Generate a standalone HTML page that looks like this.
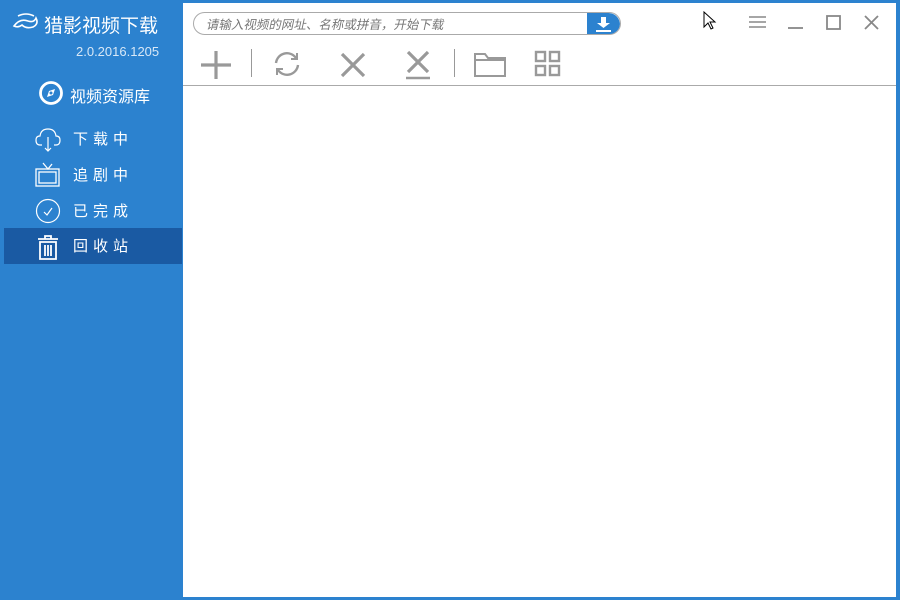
<!DOCTYPE html>
<html><head><meta charset="utf-8"><style>
*{margin:0;padding:0;box-sizing:border-box}
body{width:900px;height:600px;background:#2c82cf;position:relative;overflow:hidden;font-family:"Liberation Sans","Noto Sans CJK SC",sans-serif;color:#fff}
.main{position:absolute;left:183px;top:3px;width:713px;height:594px;background:#fff}
.title{position:absolute;left:44px;top:11px;font-size:19px}
.ver{position:absolute;left:76px;top:44px;font-size:13px;color:#d8e8f7}
.lib{position:absolute;left:70px;top:83px;font-size:16px}
.item{position:absolute;left:4px;width:178px;height:36px;font-size:15px;letter-spacing:5px}
.item span{position:absolute;left:69px;top:7px}
.item svg{position:absolute;left:31px;top:5px}
.sel{background:#1a5aa3}
.search{position:absolute;left:10px;top:9px;width:428px;height:23px;border:1px solid #aaa;border-radius:12px;background:#fff;overflow:hidden}
.search i{position:absolute;left:13px;top:1px;font-size:12.5px;color:#777;font-style:normal;transform:skewX(-12deg);transform-origin:center}
.search b{position:absolute;right:0;top:0;width:33px;height:23px;background:#2c82cf;border-radius:0 12px 12px 0}
.line{position:absolute;left:0;top:82px;width:713px;height:1px;background:#aaa}
svg{position:absolute}
</style></head><body>
<svg style="left:12px;top:12px" width="30" height="20" viewBox="0 0 30 20" fill="none" stroke="#fff" stroke-width="1.6"><path d="M2 14 Q8 6 16 9 Q22 11 24 6 Q27 12 21 15 Q14 17 10 13 Q6 16 2 14 Z"/><path d="M6 4 Q14 0 22 4"/></svg>
<div class="title">猎影视频下载</div>
<div class="ver">2.0.2016.1205</div>
<svg style="left:38px;top:80px" width="26" height="26" viewBox="0 0 26 26"><circle cx="13" cy="13" r="10.5" fill="none" stroke="#fff" stroke-width="2.8"/><path d="M9 17 L11 11 L17 9 L15 15 Z" fill="#fff"/><circle cx="13" cy="13" r="1.5" fill="#2c82cf"/></svg>
<div class="lib">视频资源库</div>
<div class="item" style="top:121px"><svg width="26" height="26" viewBox="0 0 26 26" fill="none" stroke="#fff" stroke-width="1.2"><path d="M7 19 H5 Q1 19 1 14 Q1 10 5 10 Q6 3 13 3 Q20 3 21 10 Q25 10 25 14 Q25 19 21 19 H19"/><path d="M13 11 V25 M10 22 L13 25 L16 22"/></svg><span>下载中</span></div>
<div class="item" style="top:157px"><svg width="26" height="26" viewBox="0 0 26 26" fill="none" stroke="#fff" stroke-width="1.3"><rect x="1" y="7" width="23" height="17"/><rect x="4" y="10" width="17" height="11"/><path d="M8 1 L13 7 L17 2"/></svg><span>追剧中</span></div>
<div class="item" style="top:193px"><svg width="26" height="26" viewBox="0 0 26 26" fill="none" stroke="#fff" stroke-width="1.2"><circle cx="13" cy="13" r="11.5"/><path d="M9 14 L12 17 L17 10"/></svg><span>已完成</span></div>
<div class="item sel" style="top:228px"><svg width="26" height="28" viewBox="0 0 26 28" fill="none" stroke="#fff" stroke-width="1.8"><path d="M3 6 H23 M10 6 V3 H16 V6"/><path d="M5 9 H21 V26 H5 Z"/><path d="M10 12 V23 M13 12 V23 M16 12 V23"/></svg><span>回收站</span></div>
<div class="main">
<div class="search"><i>请输入视频的网址、名称或拼音，开始下载</i><b><svg style="left:8px;top:4px" width="17" height="15" viewBox="0 0 17 15" fill="#fff"><path d="M6 0 H11 V6 H15 L8.5 11 L2 6 H6 Z"/><rect x="1" y="13" width="15" height="2"/></svg></b></div>
<svg style="left:520px;top:8px" width="14" height="20" viewBox="0 0 14 20"><path d="M1 1 V16 L5 12 L8 18 L10 17 L7 11 H12 Z" fill="#fff" stroke="#000" stroke-width="1"/></svg>
<svg style="left:566px;top:12px" width="18" height="14" stroke="#888" stroke-width="1.6"><path d="M0 2 H17 M0 7 H17 M0 12 H17"/></svg>
<svg style="left:605px;top:16px" width="16" height="14" stroke="#888" stroke-width="1.8"><path d="M0 9 H15"/></svg>
<svg style="left:643px;top:12px" width="16" height="16" fill="none" stroke="#888" stroke-width="1.8"><rect x="1" y="1" width="13" height="13"/></svg>
<svg style="left:681px;top:12px" width="16" height="16" stroke="#888" stroke-width="1.8"><path d="M1 1 L14 14 M14 1 L1 14"/></svg>
<svg style="left:17px;top:48px" width="32" height="28" stroke="#999" stroke-width="3.2"><path d="M16 0 V28 M1 14 H31"/></svg>
<div style="position:absolute;left:68px;top:46px;width:1px;height:28px;background:#999"></div>
<div style="position:absolute;left:271px;top:46px;width:1px;height:28px;background:#999"></div>
<svg style="left:90px;top:47px" width="28" height="28" viewBox="0 0 28 28" fill="none" stroke="#999" stroke-width="2.4"><path d="M3 13 A11 11 0 0 1 23 8"/><path d="M25 15 A11 11 0 0 1 5 20"/><path d="M24 3 V9 H18" stroke-width="2"/><path d="M4 25 V19 H10" stroke-width="2"/></svg>
<svg style="left:157px;top:49px" width="26" height="26" stroke="#999" stroke-width="3.2"><path d="M2 2 L24 24 M24 2 L2 24"/></svg>
<svg style="left:222px;top:47px" width="26" height="30" stroke="#999" stroke-width="3.2"><path d="M3 2 L23 22 M23 2 L3 22"/><path d="M1 28 H25" stroke-width="2.4"/></svg>
<svg style="left:291px;top:48px" width="32" height="26" viewBox="0 0 32 26" fill="none" stroke="#999" stroke-width="2"><path d="M1 3 V25 H31 V7 H14 L11 3 Z"/><path d="M1 9 H31"/></svg>
<svg style="left:351px;top:47px" width="28" height="28" fill="none" stroke="#999" stroke-width="2.4"><rect x="2" y="2" width="9" height="9"/><rect x="16" y="2" width="9" height="9"/><rect x="2" y="16" width="9" height="9"/><rect x="16" y="16" width="9" height="9"/></svg>
<div class="line"></div>
</div>
</body></html>
